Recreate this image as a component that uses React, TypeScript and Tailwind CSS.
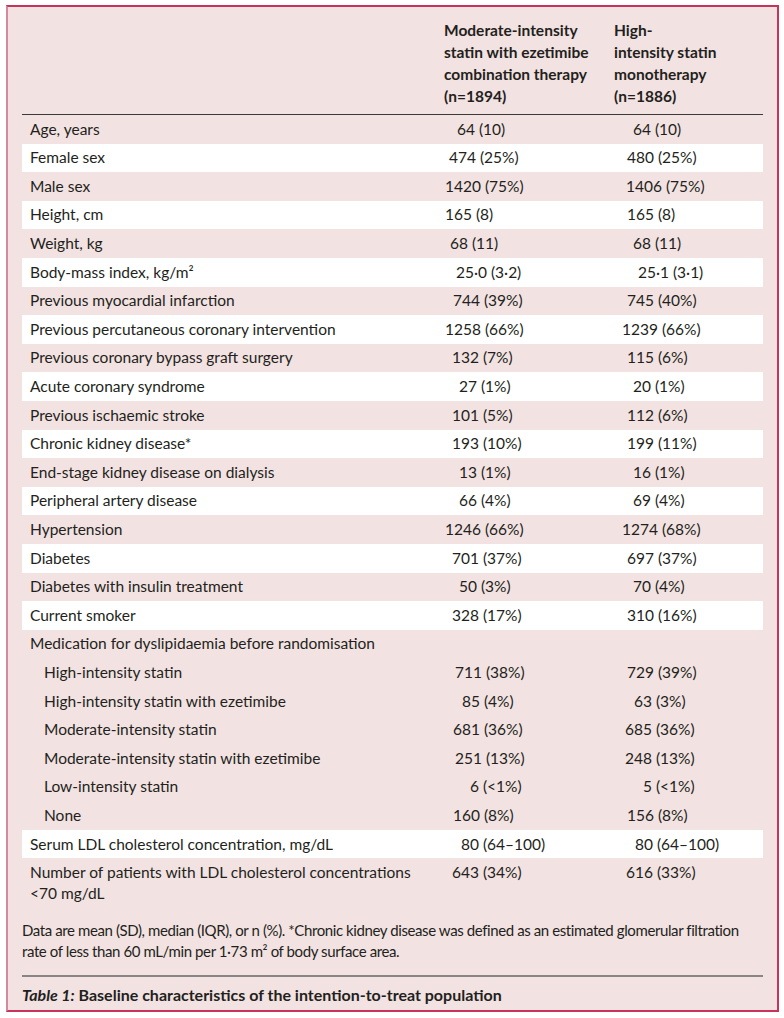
import React from "react";

type Row = { label: string; a: string; ao: number; b: string; bo: number; indent?: boolean; white?: boolean };

const rows: Row[] = [
  { label: "Age, years", a: "64 (10)", ao: 457, b: "64 (10)", bo: 633 },
  { label: "Female sex", a: "474 (25%)", ao: 449, b: "480 (25%)", bo: 627, white: true },
  { label: "Male sex", a: "1420 (75%)", ao: 445, b: "1406 (75%)", bo: 626 },
  { label: "Height, cm", a: "165 (8)", ao: 445, b: "165 (8)", bo: 627, white: true },
  { label: "Weight, kg", a: "68 (11)", ao: 450, b: "68 (11)", bo: 633 },
  { label: "Body-mass index, kg/m²", a: "25·0 (3·2)", ao: 456, b: "25·1 (3·1)", bo: 638, white: true },
  { label: "Previous myocardial infarction", a: "744 (39%)", ao: 453, b: "745 (40%)", bo: 627 },
  { label: "Previous percutaneous coronary intervention", a: "1258 (66%)", ao: 445, b: "1239 (66%)", bo: 622, white: true },
  { label: "Previous coronary bypass graft surgery", a: "132 (7%)", ao: 452, b: "115 (6%)", bo: 627 },
  { label: "Acute coronary syndrome", a: "27 (1%)", ao: 459, b: "20 (1%)", bo: 633, white: true },
  { label: "Previous ischaemic stroke", a: "101 (5%)", ao: 452, b: "112 (6%)", bo: 627 },
  { label: "Chronic kidney disease*", a: "193 (10%)", ao: 452, b: "199 (11%)", bo: 627, white: true },
  { label: "End-stage kidney disease on dialysis", a: "13 (1%)", ao: 459, b: "16 (1%)", bo: 633 },
  { label: "Peripheral artery disease", a: "66 (4%)", ao: 459, b: "69 (4%)", bo: 633, white: true },
  { label: "Hypertension", a: "1246 (66%)", ao: 445, b: "1274 (68%)", bo: 622 },
  { label: "Diabetes", a: "701 (37%)", ao: 452, b: "697 (37%)", bo: 627, white: true },
  { label: "Diabetes with insulin treatment", a: "50 (3%)", ao: 459, b: "70 (4%)", bo: 633 },
  { label: "Current smoker", a: "328 (17%)", ao: 452, b: "310 (16%)", bo: 627, white: true },
  { label: "Medication for dyslipidaemia before randomisation", a: "", ao: 0, b: "", bo: 0 },
  { label: "High-intensity statin", a: "711 (38%)", ao: 455, b: "729 (39%)", bo: 627, indent: true },
  { label: "High-intensity statin with ezetimibe", a: "85 (4%)", ao: 462, b: "63 (3%)", bo: 634, indent: true },
  { label: "Moderate-intensity statin", a: "681 (36%)", ao: 453, b: "685 (36%)", bo: 625, indent: true },
  { label: "Moderate-intensity statin with ezetimibe", a: "251 (13%)", ao: 455, b: "248 (13%)", bo: 625, indent: true },
  { label: "Low-intensity statin", a: "6 (<1%)", ao: 470, b: "5 (<1%)", bo: 643, indent: true },
  { label: "None", a: "160 (8%)", ao: 453, b: "156 (8%)", bo: 627, indent: true },
  { label: "Serum LDL cholesterol concentration, mg/dL", a: "80 (64–100)", ao: 461, b: "80 (64–100)", bo: 635, white: true },
];

export default function App() {
  return (
    <div className="w-[784px] h-[1018px] bg-white pt-[5px] pl-[6px]" style={{ fontFamily: "Lato, 'Open Sans', sans-serif" }}>
      <div className="w-[773px] h-[1007px] bg-[#f2e2e1] border-2 border-[#c8335b] border-l-[#d38a9e] px-[14px] pt-[12px] text-[#231f20]">
        <div className="grid grid-cols-[414px_170px_157px] border-b border-[#3a3a3a] pb-[7px]">
          <div />
          <div className="pl-[8px] font-bold text-[15.5px] leading-[22px]">
            Moderate-intensity<br />statin with ezetimibe<br />combination therapy<br />(n=1894)
          </div>
          <div className="pl-[8px] font-bold text-[15.5px] leading-[22px]">
            High-<br />intensity statin<br />monotherapy<br />(n=1886)
          </div>
        </div>
        {rows.map((r, i) => (
          <div key={i} className={`relative h-[28.6px] flex items-center text-[15.5px] ${r.white ? "bg-white" : ""}`}>
            <div className={r.indent ? "pl-[22px]" : "pl-[8px]"}>{r.label}</div>
            {r.a && (
              <div className="absolute top-0 h-full flex items-center" style={{ left: r.ao - 22 }}>
                {r.a}
              </div>
            )}
            {r.b && (
              <div className="absolute top-0 h-full flex items-center" style={{ left: r.bo - 22 }}>
                {r.b}
              </div>
            )}
          </div>
        ))}
        <div className="relative h-[50px] text-[15.5px] leading-[21px] pt-[4px]">
          <div className="pl-[8px] w-[400px]">Number of patients with LDL cholesterol concentrations &lt;70 mg/dL</div>
          <div className="absolute top-[4px]" style={{ left: 452 - 22 }}>643 (34%)</div>
          <div className="absolute top-[4px]" style={{ left: 626 - 22 }}>616 (33%)</div>
        </div>
        <div className="mt-[12px] text-[15px] leading-[21px] tracking-[-0.4px]">
          Data are mean (SD), median (IQR), or n (%). *Chronic kidney disease was defined as an estimated glomerular filtration rate of less than 60 mL/min per 1·73 m² of body surface area.
        </div>
        <div className="mt-[13px] border-t-2 border-[#8a8585]" />
        <div className="pt-[6px] text-[16px] font-bold">
          <span className="italic">Table 1:</span> Baseline characteristics of the intention-to-treat population
        </div>
      </div>
    </div>
  );
}
